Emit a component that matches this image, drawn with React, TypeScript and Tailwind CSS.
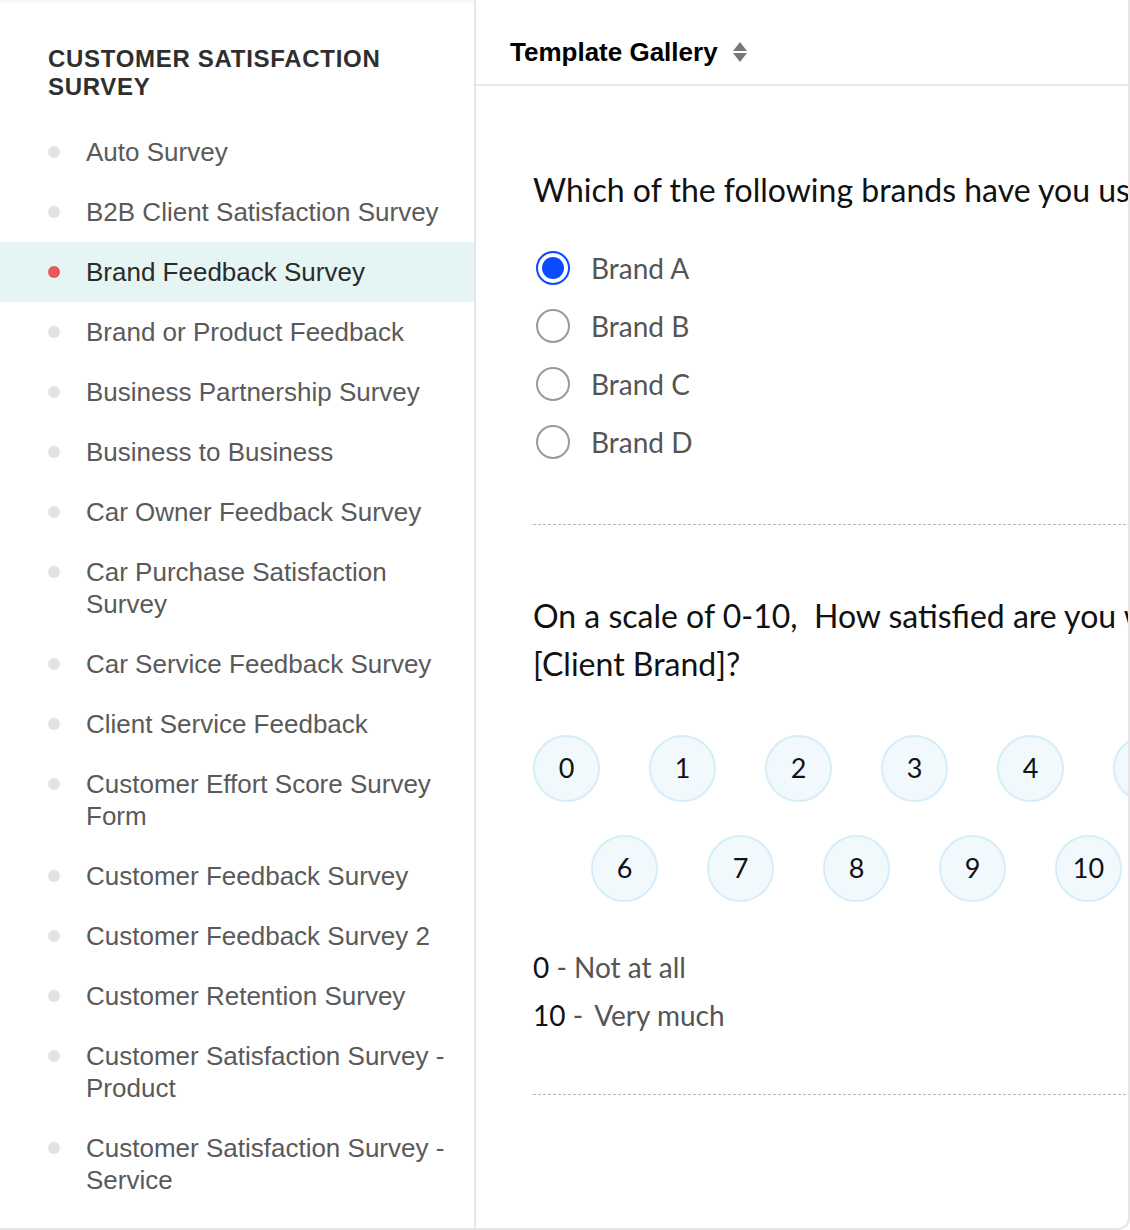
import React from "react";

const surveys = [
  "Auto Survey",
  "B2B Client Satisfaction Survey",
  "Brand Feedback Survey",
  "Brand or Product Feedback",
  "Business Partnership Survey",
  "Business to Business",
  "Car Owner Feedback Survey",
  "Car Purchase Satisfaction Survey",
  "Car Service Feedback Survey",
  "Client Service Feedback",
  "Customer Effort Score Survey Form",
  "Customer Feedback Survey",
  "Customer Feedback Survey 2",
  "Customer Retention Survey",
  "Customer Satisfaction Survey - Product",
  "Customer Satisfaction Survey - Service",
];

const brands = ["Brand A", "Brand B", "Brand C", "Brand D"];
const scale = [0, 1, 2, 3, 4, 5, 6, 7, 8, 9, 10];

const SortIcon = () => (
  <svg width="14" height="20" viewBox="0 0 14 20" fill="#777">
    <polygon points="0,9 7,0 14,9" />
    <polygon points="0,11 14,11 7,20" />
  </svg>
);

const Sidebar = () => {
  const selected = "Brand Feedback Survey";

  return (
    <aside className="w-[476px] shrink-0 border-r-2 border-[#e6e6e6] pt-[45px] font-['Liberation_Sans',Arial,sans-serif] shadow-[inset_0_6px_6px_-6px_rgba(0,0,0,0.08)]">
      <h2 className="px-[48px] text-[24px] leading-[28px] font-bold tracking-[0.7px] text-[#2f2f2f]">
        CUSTOMER SATISFACTION SURVEY
      </h2>

      <ul className="mt-[21px]">
        {surveys.map((name) => {
          const active = name === selected;
          return (
            <li
              key={name}
              className={`flex py-[14px] pl-[48px] pr-[14px] ${
                active ? "bg-[#e5f5f4]" : ""
              }`}
            >
              <span className="flex h-[32px] w-[38px] shrink-0 items-center">
                <span
                  className={`h-[12px] w-[12px] rounded-full ${
                    active ? "bg-[#e8575c]" : "bg-[#e3e3e3]"
                  }`}
                />
              </span>
              <span
                className={`text-[26px] leading-[32px] ${
                  active ? "text-[#2b2b2b]" : "text-[#5a5a5a]"
                }`}
              >
                {name}
              </span>
            </li>
          );
        })}
      </ul>
    </aside>
  );
};

const Radio = ({ checked, label }: { checked: boolean; label: string }) => (
  <label className="flex h-[58px] items-center pl-[3px]">
    <span
      className={`flex h-[34px] w-[34px] items-center justify-center rounded-full border-2 ${
        checked ? "border-[#0a4bff]" : "border-[#9a9a9a]"
      }`}
    >
      {checked && <span className="h-[22px] w-[22px] rounded-full bg-[#0a4bff]" />}
    </span>
    <span className="ml-[21px] text-[28px] text-[#555]">{label}</span>
  </label>
);

const App = () => {
  return (
    <div className="flex h-[1230px] w-[1130px] overflow-hidden rounded-br-[12px] border-r-2 border-b-2 border-[#e6e6e6] bg-white">
      <Sidebar />

      <main className="flex min-w-0 flex-1 flex-col overflow-hidden">
        {/* Header */}
        <header className="h-[86px] shrink-0 border-b-2 border-[#e8e8e8] pt-[36px] pl-[34px]">
          <div className="flex items-center gap-[15px] font-['Liberation_Sans',Arial,sans-serif]">
            <span className="text-[26px] leading-[32px] font-bold text-black">
              Template Gallery
            </span>
            <SortIcon />
          </div>
        </header>

        {/* Survey preview */}
        <div className="w-[760px] shrink-0 pt-[80px] pl-[57px] font-['Lato','Inter',sans-serif]">
          <p className="whitespace-nowrap text-[32px] leading-[48px] text-[#111]">
            Which of the following brands have you used recently?
          </p>

          <div className="mt-[25px] flex flex-col">
            {brands.map((b, i) => (
              <Radio key={b} checked={i === 0} label={b} />
            ))}
          </div>

          <div className="mt-[53px] border-t-[1.5px] border-dashed border-[#b5b5b5]" />

          <p className="mt-[67px] whitespace-nowrap text-[32px] leading-[48px] text-[#111]">
            On a scale of 0-10,&nbsp; How satisfied are you with
            <br />
            [Client Brand]?
          </p>

          <div className="mt-[47px] flex w-[647px] flex-wrap justify-center gap-x-[49px] gap-y-[33px]">
            {scale.map((n) => (
              <button
                key={n}
                type="button"
                className="flex h-[67px] w-[67px] items-center justify-center rounded-full border-2 border-[#d5eef9] bg-[#f1f9fd] text-[27px] text-[#111]"
              >
                {n}
              </button>
            ))}
          </div>

          <div className="mt-[41px] text-[28px] leading-[48px]">
            <p>
              <span className="text-[#111]">0</span>
              <span className="text-[#555]"> - </span>
              <span className="text-[#555]">Not at all</span>
            </p>
            <p>
              <span className="text-[#111]">10</span>
              <span className="text-[#555]"> - </span>
              <span className="ml-[4px] text-[#555]">Very much</span>
            </p>
          </div>

          <div className="mt-[55px] border-t-[1.5px] border-dashed border-[#b5b5b5]" />
        </div>
      </main>
    </div>
  );
};

export default App;
